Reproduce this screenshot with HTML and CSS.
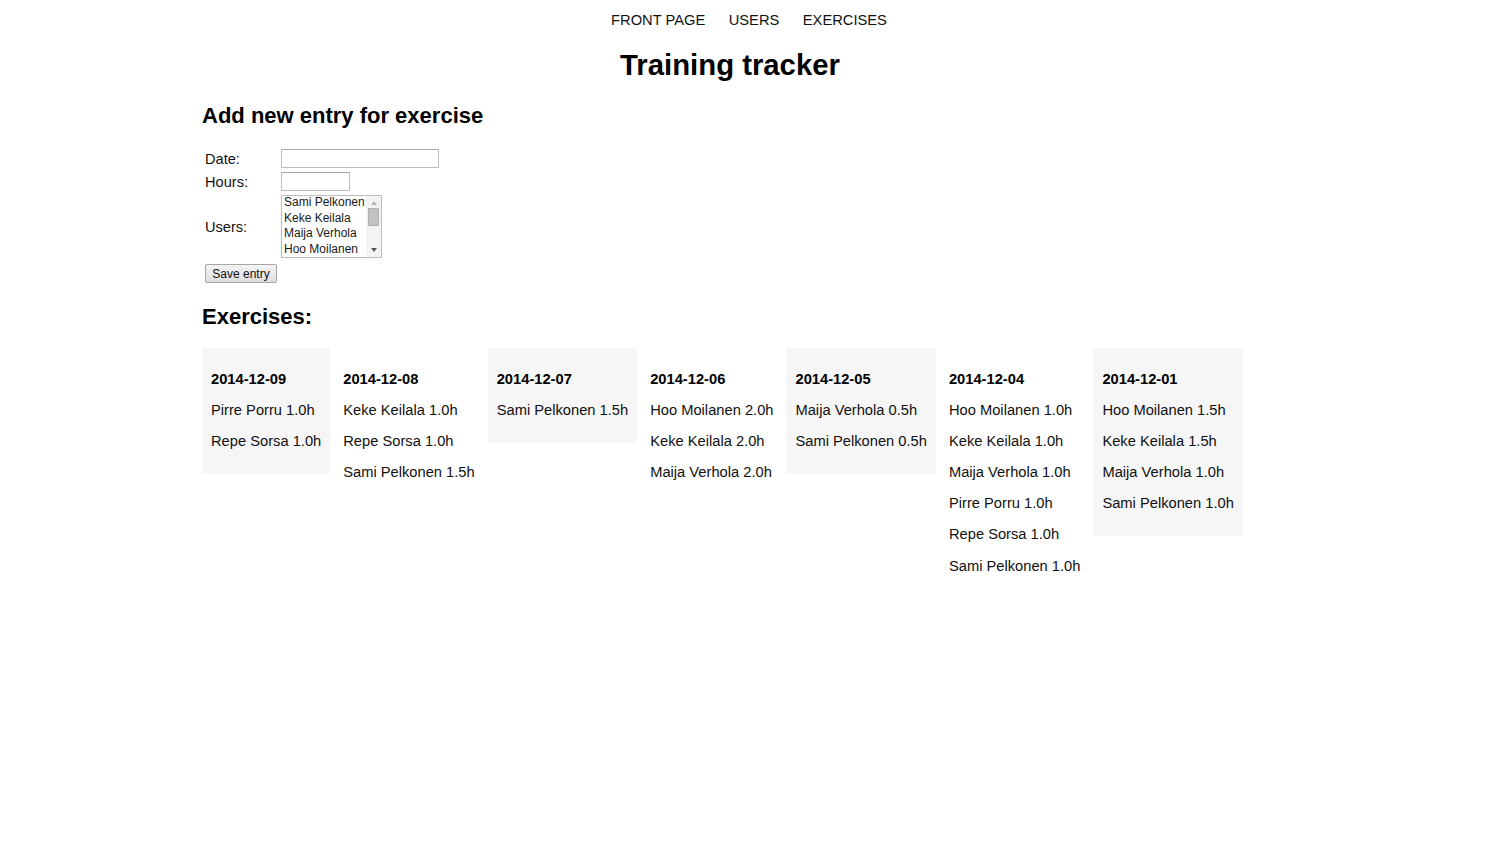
FILE: index.html
```html
<!DOCTYPE html>
<html lang="en">
<head>
<meta charset="utf-8">
<title>Training tracker</title>
<link rel="stylesheet" href="styles.css">
</head>
<body>
<nav class="nav">
  <a class="nav-link" href="#">FRONT PAGE</a>
  <a class="nav-link" href="#">USERS</a>
  <a class="nav-link" href="#">EXERCISES</a>
</nav>
<main class="content">
  <h1 class="title">Training tracker</h1>
  <h2 class="section-title">Add new entry for exercise</h2>
  <form class="entry-form">
    <label class="form-label">Date:</label>
    <input class="text-input date-input" type="text">
    <label class="form-label">Hours:</label>
    <input class="text-input hours-input" type="text">
    <label class="form-label">Users:</label>
    <div class="listbox" role="listbox">
      <div class="listbox-options">
        <div class="listbox-option">Sami Pelkonen</div>
        <div class="listbox-option">Keke Keilala</div>
        <div class="listbox-option">Maija Verhola</div>
        <div class="listbox-option">Hoo Moilanen</div>
      </div>
      <div class="listbox-scrollbar">
        <span class="arrow arrow-up"></span>
        <span class="thumb"></span>
        <span class="arrow arrow-down"></span>
      </div>
    </div>
    <button class="save-button" type="button">Save entry</button>
  </form>
  <h2 class="section-title exercises-title">Exercises:</h2>
  <div class="days">
    <div class="day shaded">
      <p class="day-date">2014-12-09</p>
      <p>Pirre Porru 1.0h</p>
      <p>Repe Sorsa 1.0h</p>
    </div>
    <div class="day">
      <p class="day-date">2014-12-08</p>
      <p>Keke Keilala 1.0h</p>
      <p>Repe Sorsa 1.0h</p>
      <p>Sami Pelkonen 1.5h</p>
    </div>
    <div class="day shaded">
      <p class="day-date">2014-12-07</p>
      <p>Sami Pelkonen 1.5h</p>
    </div>
    <div class="day">
      <p class="day-date">2014-12-06</p>
      <p>Hoo Moilanen 2.0h</p>
      <p>Keke Keilala 2.0h</p>
      <p>Maija Verhola 2.0h</p>
    </div>
    <div class="day shaded">
      <p class="day-date">2014-12-05</p>
      <p>Maija Verhola 0.5h</p>
      <p>Sami Pelkonen 0.5h</p>
    </div>
    <div class="day">
      <p class="day-date">2014-12-04</p>
      <p>Hoo Moilanen 1.0h</p>
      <p>Keke Keilala 1.0h</p>
      <p>Maija Verhola 1.0h</p>
      <p>Pirre Porru 1.0h</p>
      <p>Repe Sorsa 1.0h</p>
      <p>Sami Pelkonen 1.0h</p>
    </div>
    <div class="day shaded">
      <p class="day-date">2014-12-01</p>
      <p>Hoo Moilanen 1.5h</p>
      <p>Keke Keilala 1.5h</p>
      <p>Maija Verhola 1.0h</p>
      <p>Sami Pelkonen 1.0h</p>
    </div>
  </div>
</main>
</body>
</html>
```

FILE: styles.css
```css
html, body {
  margin: 0;
  padding: 0;
  background: #ffffff;
}

body {
  font-family: "Liberation Sans", Arial, sans-serif;
  font-size: 14.7px;
  color: #111111;
}

.nav {
  display: flex;
  justify-content: center;
  gap: 23.5px;
  padding-top: 12px;
  padding-right: 2px;
  line-height: 17px;
}

.nav-link {
  color: #111111;
  text-decoration: none;
  font-size: 14.7px;
}

.content {
  margin-left: 202px;
  width: 1056px;
}

.title {
  margin: 19px 0 0 0;
  font-size: 29.3px;
  line-height: 34px;
  font-weight: bold;
  text-align: center;
  color: #000000;
}

.section-title {
  margin: 20.5px 0 0 0;
  font-size: 22px;
  line-height: 25px;
  font-weight: bold;
  color: #000000;
}

.entry-form {
  display: grid;
  grid-template-columns: 79px auto;
  row-gap: 4px;
  align-items: center;
  justify-items: start;
  margin-top: 21.5px;
}

.form-label {
  padding-left: 3px;
  font-size: 14.6px;
  color: #111111;
}

.text-input {
  box-sizing: border-box;
  height: 19px;
  border: 1px solid #bdbdbd;
  border-top-color: #a9a9a9;
  padding: 0 2px;
  font-family: "Liberation Sans", Arial, sans-serif;
  font-size: 12px;
  margin: 0;
  background: #ffffff;
}

.date-input {
  width: 158px;
}

.hours-input {
  width: 69px;
}

.listbox {
  box-sizing: border-box;
  width: 101px;
  height: 63px;
  border: 1px solid #bdbdbd;
  display: flex;
  background: #ffffff;
  overflow: hidden;
}

.listbox-options {
  flex: 1;
  padding-left: 2px;
  font-size: 12px;
  line-height: 15.5px;
  color: #1a1a1a;
  white-space: nowrap;
  margin-top: -1px;
}

.listbox-scrollbar {
  width: 15px;
  background: #f3f3f3;
  display: flex;
  flex-direction: column;
  align-items: center;
}

.arrow {
  width: 0;
  height: 0;
  border-left: 3.5px solid transparent;
  border-right: 3.5px solid transparent;
}

.arrow-up {
  margin-top: 5px;
  border-bottom: 4px solid #b5b5b5;
}

.thumb {
  margin-top: 3px;
  width: 11px;
  height: 18px;
  background: #c2c2c2;
  border: 1px solid #b0b0b0;
  box-sizing: border-box;
}

.arrow-down {
  margin-top: auto;
  margin-bottom: 5px;
  border-top: 4px solid #555555;
}

.save-button {
  grid-column: 1 / 2;
  margin: 2px 0 0 3px;
  box-sizing: border-box;
  width: 72px;
  height: 19px;
  padding: 0;
  font-family: "Liberation Sans", Arial, sans-serif;
  font-size: 12px;
  color: #111111;
  background: linear-gradient(#f4f4f4, #dedede);
  border: 1px solid #a5a5a5;
  border-radius: 2px;
}

.exercises-title {
  margin-top: 20.5px;
}

.days {
  display: flex;
  align-items: flex-start;
  gap: 4px;
  margin-top: 19.5px;
}

.day {
  padding: 8.5px 9px 9.5px 9px;
  line-height: 16.6px;
}

.day.shaded {
  background: #f6f6f6;
}

.day p {
  margin: 14.5px 0;
  white-space: nowrap;
  color: #111111;
}

.day .day-date {
  font-weight: bold;
  color: #000000;
}
```
